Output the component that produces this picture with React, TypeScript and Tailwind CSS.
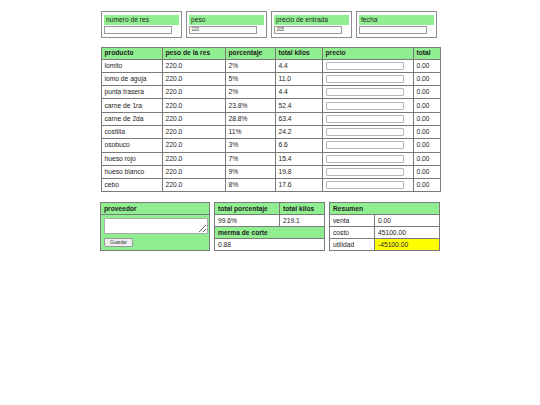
import React from "react";

const rows: [string, string, string, string][] = [
  ["lomito", "220.0", "2%", "4.4"],
  ["lomo de aguja", "220.0", "5%", "11.0"],
  ["punta trasera", "220.0", "2%", "4.4"],
  ["carne de 1ra", "220.0", "23.8%", "52.4"],
  ["carne de 2da", "220.0", "28.8%", "63.4"],
  ["costilla", "220.0", "11%", "24.2"],
  ["osobuco", "220.0", "3%", "6.6"],
  ["hueso rojo", "220.0", "7%", "15.4"],
  ["hueso blanco", "220.0", "9%", "19.8"],
  ["cebo", "220.0", "8%", "17.6"],
];

function TopBox({ label, value }: { label: string; value: string }) {
  return (
    <div className="w-[81px] h-[27px] border-[1.5px] border-[#8c8c8c] pt-[2.5px] px-[2px]">
      <div className="h-[10.5px] bg-[#90ee90] pl-[2px] leading-[10.5px] text-[6.7px] text-[#222]">{label}</div>
      <div className="mt-[1px] w-[68px] h-[8.3px] border border-[#9a9a9a] bg-white pl-[1.5px] text-[4.6px] leading-[6.3px] text-[#333]">
        {value}
      </div>
    </div>
  );
}

const cell = "border border-[#7a7a7a] pl-[3px] text-left align-middle";

export default function App() {
  return (
    <div
      className="w-[540px] h-[405px] bg-white text-[#222] text-[6.7px]"
      style={{ fontFamily: '"Liberation Sans", Arial, sans-serif' }}
    >
      <div className="ml-[101px] w-[339px] pt-[11px]">
        <div className="flex gap-[4px]">
          <TopBox label="numero de res" value="" />
          <TopBox label="peso" value="220" />
          <TopBox label="precio de entrada" value="205" />
          <TopBox label="fecha" value="" />
        </div>

        <table className="mt-[8.5px] w-[339px] border-collapse table-fixed -ml-[0.5px]">
          <colgroup>
            <col className="w-[61px]" />
            <col className="w-[63px]" />
            <col className="w-[50px]" />
            <col className="w-[47px]" />
            <col className="w-[91px]" />
            <col className="w-[27px]" />
          </colgroup>
          <thead>
            <tr className="h-[12px] bg-[#90ee90] font-bold">
              <th className={cell}>producto</th>
              <th className={cell}>peso de la res</th>
              <th className={cell}>porcentaje</th>
              <th className={cell}>total kilos</th>
              <th className={cell}>precio</th>
              <th className={cell}>total</th>
            </tr>
          </thead>
          <tbody>
            {rows.map((r) => (
              <tr key={r[0]} className="h-[13.3px]">
                <td className={cell}>{r[0]}</td>
                <td className={cell}>{r[1]}</td>
                <td className={cell}>{r[2]}</td>
                <td className={cell}>{r[3]}</td>
                <td className={cell}>
                  <div className="w-[78px] h-[8px] border border-[#b5b5b5] rounded-[1px] bg-white" />
                </td>
                <td className={cell}>0.00</td>
              </tr>
            ))}
          </tbody>
        </table>

        <div className="mt-[10px] flex -ml-[1px]">
          <table className="w-[110px] border-collapse bg-[#90ee90] table-fixed">
            <tbody>
              <tr className="h-[12px]">
                <th className={cell + " font-bold"}>proveedor</th>
              </tr>
              <tr>
                <td className="border-x border-[#7a7a7a] pt-[2px] pl-[3px] pr-[2px]">
                  <textarea className="block w-[104px] h-[16px] border border-[#aaa] bg-white rounded-[1px] resize" />
                </td>
              </tr>
              <tr>
                <td className="border-x border-b border-[#7a7a7a] pl-[3px] pt-[3px] pb-[3px]">
                  <button className="block w-[29px] h-[8.5px] border border-[#999] bg-[#efefef] rounded-[1px] text-[4.6px] leading-[6px] text-[#333]">
                    Guardar
                  </button>
                </td>
              </tr>
            </tbody>
          </table>

          <table className="ml-[4px] w-[110px] border-collapse table-fixed">
            <colgroup>
              <col className="w-[65px]" />
              <col className="w-[45px]" />
            </colgroup>
            <tbody>
              <tr className="h-[12px] bg-[#90ee90] font-bold">
                <th className={cell}>total porcentaje</th>
                <th className={cell}>total kilos</th>
              </tr>
              <tr className="h-[12px]">
                <td className={cell}>99.6%</td>
                <td className={cell}>219.1</td>
              </tr>
              <tr className="h-[12px] bg-[#90ee90] font-bold">
                <th className={cell} colSpan={2}>merma de corte</th>
              </tr>
              <tr className="h-[12px]">
                <td className={cell} colSpan={2}>0.88</td>
              </tr>
            </tbody>
          </table>

          <table className="ml-[4px] w-[110px] border-collapse table-fixed">
            <colgroup>
              <col className="w-[45px]" />
              <col className="w-[65px]" />
            </colgroup>
            <tbody>
              <tr className="h-[12px] bg-[#90ee90] font-bold">
                <th className={cell} colSpan={2}>Resumen</th>
              </tr>
              <tr className="h-[12px]">
                <td className={cell}>venta</td>
                <td className={cell}>0.00</td>
              </tr>
              <tr className="h-[12px]">
                <td className={cell}>costo</td>
                <td className={cell}>45100.00</td>
              </tr>
              <tr className="h-[12px]">
                <td className={cell}>utilidad</td>
                <td className={cell + " bg-[#ffff00]"}>-45100.00</td>
              </tr>
            </tbody>
          </table>
        </div>
      </div>
    </div>
  );
}
